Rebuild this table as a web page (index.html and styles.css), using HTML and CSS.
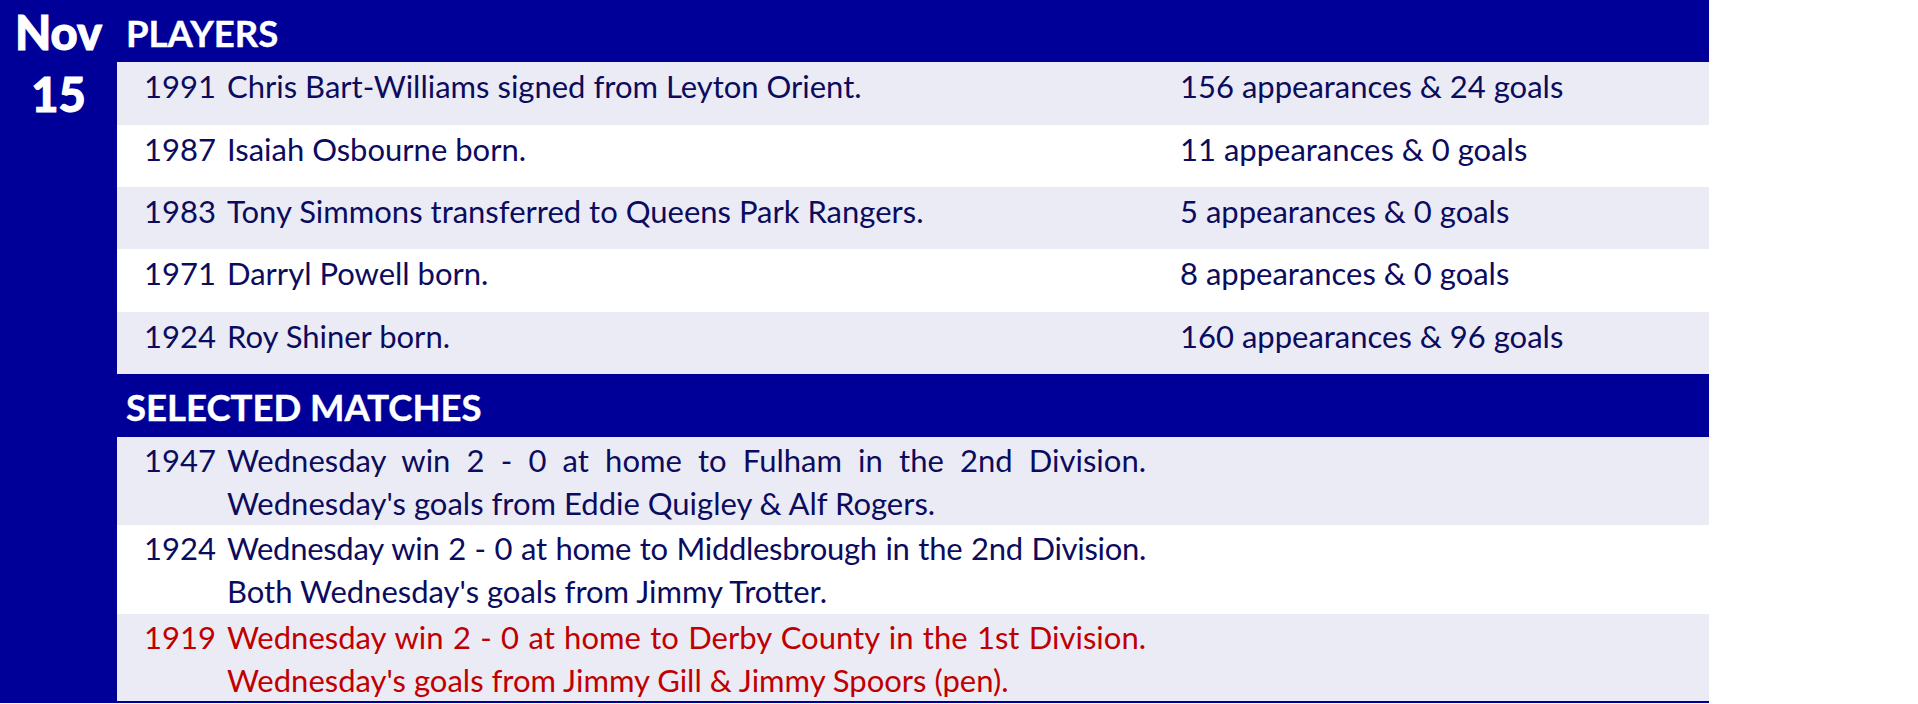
FILE: index.html
```html
<!DOCTYPE html>
<html>
<head>
<meta charset="utf-8">
<link rel="stylesheet" href="styles.css">
</head>
<body>
<div class="board">
  <div class="date">
    <div class="date-cell">Nov</div>
    <div class="date-cell">15</div>
  </div>
  <div class="content">
    <div class="section-head">PLAYERS</div>
    <div class="prow alt h63"><span class="yr">1991</span><span class="desc">Chris Bart-Williams signed from Leyton Orient.</span><span class="stat">156 appearances &amp; 24 goals</span></div>
    <div class="prow h62"><span class="yr">1987</span><span class="desc">Isaiah Osbourne born.</span><span class="stat">11 appearances &amp; 0 goals</span></div>
    <div class="prow alt h62"><span class="yr">1983</span><span class="desc">Tony Simmons transferred to Queens Park Rangers.</span><span class="stat">5 appearances &amp; 0 goals</span></div>
    <div class="prow h63"><span class="yr">1971</span><span class="desc">Darryl Powell born.</span><span class="stat">8 appearances &amp; 0 goals</span></div>
    <div class="prow alt h62"><span class="yr">1924</span><span class="desc">Roy Shiner born.</span><span class="stat">160 appearances &amp; 96 goals</span></div>
    <div class="section-head sh2">SELECTED MATCHES</div>
    <div class="mrow alt h88"><span class="yr">1947</span><div class="mdesc"><div class="l1">Wednesday win 2 - 0 at home to Fulham in the 2nd Division.</div><div>Wednesday's goals from Eddie Quigley &amp; Alf Rogers.</div></div></div>
    <div class="mrow h89"><span class="yr">1924</span><div class="mdesc"><div class="l1 tight">Wednesday win 2 - 0 at home to Middlesbrough in the 2nd Division.</div><div>Both Wednesday's goals from Jimmy Trotter.</div></div></div>
    <div class="mrow alt red h87"><span class="yr">1919</span><div class="mdesc"><div class="l1">Wednesday win 2 - 0 at home to Derby County in the 1st Division.</div><div>Wednesday's goals from Jimmy Gill &amp; Jimmy Spoors (pen).</div></div></div>
  </div>
</div>
</body>
</html>
```
FILE: styles.css
```css
html, body {
  margin: 0;
  padding: 0;
  background: #ffffff;
}
body {
  font-family: Lato, "Noto Sans", sans-serif;
}
.board {
  width: 1709px;
  height: 703px;
  background: #000099;
  display: grid;
  grid-template-columns: 117px 1fr;
  align-items: start;
}
.date {
  display: flex;
  flex-direction: column;
}
.date-cell {
  height: 62px;
  box-sizing: border-box;
  padding-top: 3px;
  line-height: 58px;
  font-size: 47px;
  font-weight: 900;
  color: #ffffff;
  text-align: center;
  -webkit-text-stroke: 1px #ffffff;
}
.content {
  display: flex;
  flex-direction: column;
}
.section-head {
  height: 62px;
  box-sizing: border-box;
  padding: 6px 0 0 9px;
  line-height: 55px;
  font-size: 36.5px;
  font-weight: 700;
  color: #ffffff;
  -webkit-text-stroke: 0.4px #ffffff;
}
.sh2 {
  height: 63px;
}
.prow, .mrow {
  display: grid;
  box-sizing: border-box;
  padding-left: 27px;
  background: #ffffff;
  color: #0c0c5e;
  font-size: 31px;
  line-height: 43px;
}
.prow {
  grid-template-columns: 83px 953px 1fr;
  padding-top: 3px;
}
.mrow {
  grid-template-columns: 83px 919px;
  padding-top: 2px;
}
.alt {
  background: #ebebf5;
}
.red {
  color: #c00000;
}
.l1 {
  text-align: justify;
  text-align-last: justify;
}
.tight {
  letter-spacing: -0.3px;
}
.h62 { height: 62px; }
.h63 { height: 63px; }
.h87 { height: 87px; }
.h88 { height: 88px; }
.h89 { height: 89px; }
```
